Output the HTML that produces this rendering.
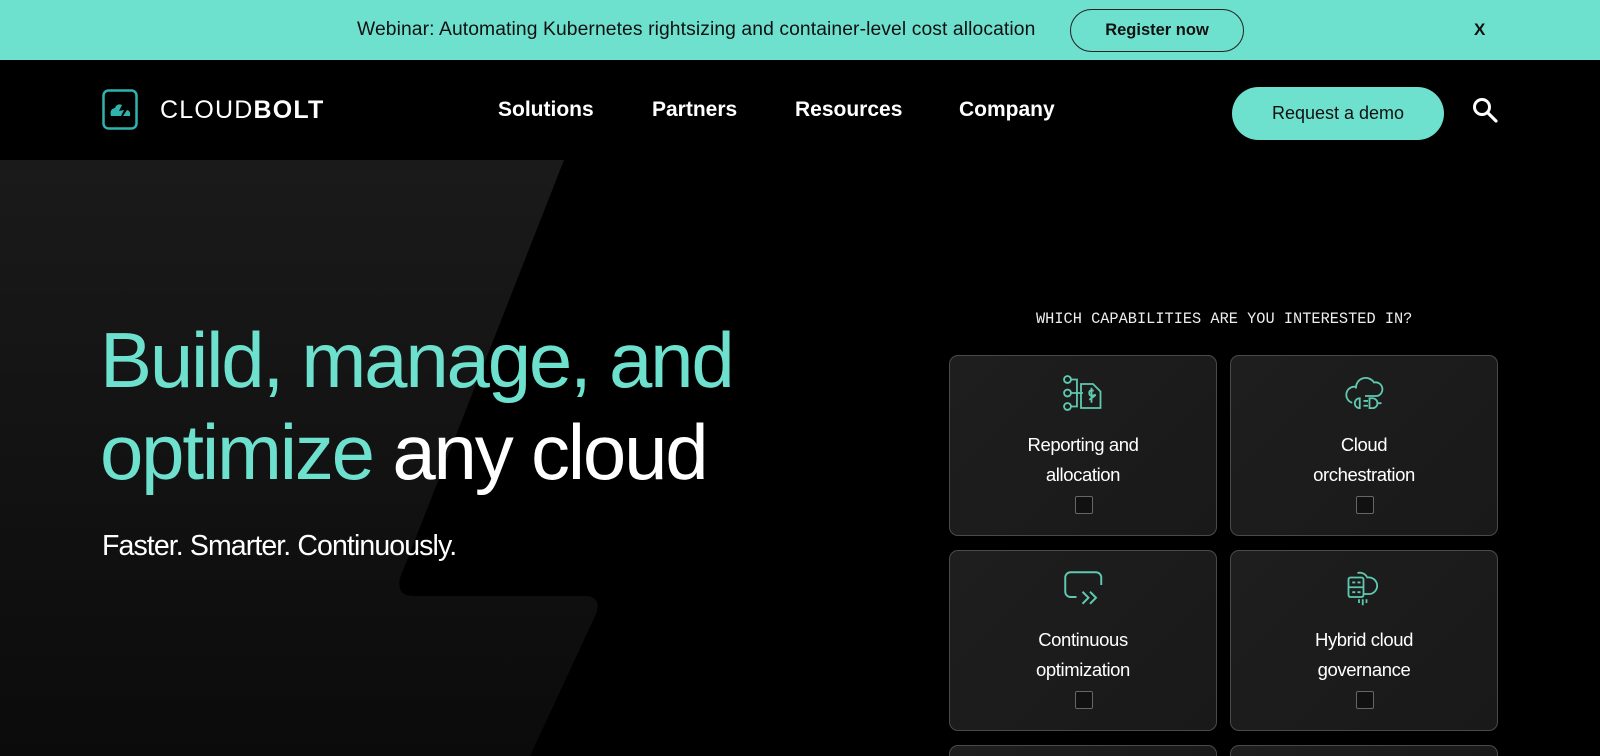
<!DOCTYPE html>
<html><head><meta charset="utf-8"><style>
*{margin:0;padding:0;box-sizing:border-box}
html,body{width:1600px;height:756px;overflow:hidden;background:#000}
body{font-family:"Liberation Sans",sans-serif}
#w{position:relative;width:1600px;height:756px;overflow:hidden;background:#000}
.banner{position:absolute;left:0;top:0;width:1600px;height:60px;background:#6ee0ce}
.banner .t{position:absolute;left:357px;top:19px;font-size:19.3px;color:#111;white-space:nowrap;letter-spacing:0.1px}
.reg{position:absolute;left:1070px;top:9px;width:174px;height:43px;border:1px solid #222;border-radius:22px;font-size:16.5px;font-weight:bold;color:#111;text-align:center;line-height:41px}
.x{position:absolute;left:1474px;top:20px;font-size:17px;font-weight:bold;color:#111}
.bg{position:absolute;left:0;top:0}
.nav a{position:absolute;top:98px;color:#fff;font-size:21px;font-weight:bold;text-decoration:none}
.demo{position:absolute;left:1232px;top:87px;width:212px;height:53px;border-radius:27px;background:#6ee0ce;color:#111;font-size:18px;text-align:center;line-height:53px}
h1{position:absolute;left:100px;top:314px;font-size:78px;font-weight:normal;line-height:92px;color:#6ee0ce;letter-spacing:-2.2px;white-space:nowrap}
h1 span{color:#fff}
.sub{position:absolute;left:102px;top:530px;font-size:28.5px;color:#fff;letter-spacing:-0.9px}
.q{position:absolute;left:1036px;top:310px;font-family:"Liberation Mono",monospace;font-size:15.3px;color:#eee}
.card{position:absolute;width:268px;height:181px;background:linear-gradient(135deg,#1e1e1e,#191919);border:1px solid #4a4a4a;border-radius:9px;text-align:center;color:#fff}
.card svg{position:absolute;left:110px;top:16px}
.card .l{position:absolute;left:0;right:0;top:74px;font-size:18.5px;line-height:30px;letter-spacing:-0.4px}
.card .cb{position:absolute;left:125px;top:140px;width:18px;height:18px;border:1.5px solid #666;border-radius:2px;background:#111}
</style></head><body><div id="w">
<div class="banner"><div class="t">Webinar: Automating Kubernetes rightsizing and container-level cost allocation</div><div class="reg">Register now</div><div class="x">X</div></div>
<svg class="bg" width="1600" height="756"><defs><linearGradient id="g" x1="0" y1="0" x2="0" y2="1"><stop offset="0" stop-color="#1a1a1a"/><stop offset="1" stop-color="#0b0b0b"/></linearGradient></defs>
<path d="M0 160 L564 160 L400 578 Q396 596 414 596 L587 596 Q602 598 596 614 L530 756 L0 756 Z" fill="url(#g)"/></svg>
<svg style="position:absolute;left:102px;top:89px" width="36" height="41" viewBox="0 0 36 41"><rect x="1.5" y="1.5" width="33" height="38" rx="5" fill="none" stroke="#2fb3ad" stroke-width="2.5"/><path d="M9 27 Q7 20 13 19 Q15 14 20 16 L17 22 L22 21 L19 27 Z M21 27 L25 21 Q29 22 28 27 Z" fill="#2fb3ad"/></svg>
<div style="position:absolute;left:160px;top:96px;font-size:25px;color:#fff;letter-spacing:1.2px">CLOUD<b>BOLT</b></div>
<div class="nav"><a style="left:498px">Solutions</a><a style="left:652px">Partners</a><a style="left:795px">Resources</a><a style="left:959px">Company</a></div>
<div class="demo">Request a demo</div>
<svg style="position:absolute;left:1471px;top:96px" width="30" height="30" viewBox="0 0 30 30"><circle cx="11" cy="11" r="7.5" fill="none" stroke="#fff" stroke-width="3"/><path d="M16.5 16.5 L25 25" stroke="#fff" stroke-width="3.2" stroke-linecap="round"/></svg>
<h1>Build, manage, and<br>optimize <span>any cloud</span></h1>
<div class="sub">Faster. Smarter. Continuously.</div>
<div class="q">WHICH CAPABILITIES ARE YOU INTERESTED IN?</div>

<div class="card" style="left:949px;top:355px"><svg width="48" height="48" viewBox="0 0 32 32" fill="none" stroke="#5fc9b0" stroke-width="1.2"><circle cx="5" cy="5" r="2.3"/><circle cx="5" cy="14" r="2.3"/><circle cx="5" cy="23" r="2.3"/><path d="M7.3 5h4v18h-4M7.3 14h8"/><path d="M14 8h8l5 5v11H14z"/><path d="M22.5 12.5q-3-1-3 1.5t3 1.5-3 3M21 10.5v10"/></svg><div class="l">Reporting and<br>allocation</div><div class="cb"></div></div>
<div class="card" style="left:1230px;top:355px"><svg width="48" height="48" viewBox="0 0 32 32" fill="none" stroke="#5fc9b0" stroke-width="1.2"><path d="M10 11a6.5 6.5 0 0 1 12-4a4.5 4.5 0 0 1 2 9h-8"/><path d="M10.5 10a5 5 0 0 0-3 10.5"/><path d="M12.5 17.5a3.3 3.3 0 0 0 0 6.6zM15 19.3h3M15 22.5h3M19 17.5h2a3.3 3.3 0 0 1 0 6.6h-2zM24 20.8h3"/></svg><div class="l">Cloud<br>orchestration</div><div class="cb"></div></div>
<div class="card" style="left:949px;top:550px"><svg width="48" height="48" viewBox="0 0 32 32" fill="none" stroke="#5fc9b0" stroke-width="1.3"><path d="M11 20H7a3.5 3.5 0 0 1-3.5-3.5V7A3.5 3.5 0 0 1 7 3.5h17A3.5 3.5 0 0 1 27.5 7v5"/><path d="M15 16.5l4 4-4 4M20 16.5l4 4-4 4"/></svg><div class="l">Continuous<br>optimization</div><div class="cb"></div></div>
<div class="card" style="left:1230px;top:550px"><svg width="48" height="48" viewBox="0 0 32 32" fill="none" stroke="#5fc9b0" stroke-width="1.2"><rect x="5" y="7" width="10" height="13" rx="1.3"/><path d="M5 13.5h10M7.5 10.3h2M11 10.3h2M7.5 16.8h2M11 16.8h2"/><path d="M11 4a5.5 5.5 0 0 1 6.5 3a4.5 4.5 0 0 1 2 11h-4.5"/><path d="M12 21.5v2.5M14.5 21.5v4M17 21.5v2.5"/></svg><div class="l">Hybrid cloud<br>governance</div><div class="cb"></div></div>
<div class="card" style="left:949px;top:745px;height:11px;border-bottom:0;border-radius:9px 9px 0 0"></div>
<div class="card" style="left:1230px;top:745px;height:11px;border-bottom:0;border-radius:9px 9px 0 0"></div>
</div></body></html>
